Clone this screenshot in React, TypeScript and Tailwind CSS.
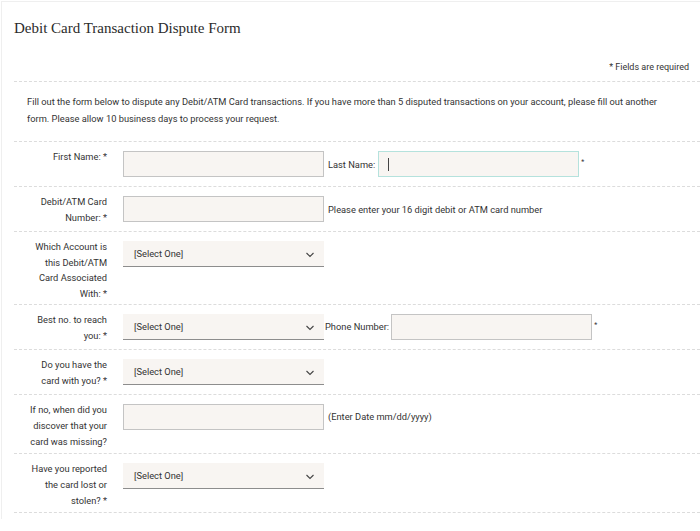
import type { ReactNode } from 'react'

const sans = "font-['Roboto','Liberation_Sans',sans-serif]"

function Label({ children, tight = false }: { children: ReactNode; tight?: boolean }) {
  return (
    <div
      className={
        'w-[93px] shrink-0 pt-[7px] pb-[3px] text-right text-[9.3px] text-[#333] ' +
        (tight ? 'leading-[15.5px]' : 'leading-[16px]')
      }
    >
      {children}
    </div>
  )
}

function TextBox({ focused = false }: { focused?: boolean }) {
  return (
    <div
      className={
        'relative h-[26px] w-[201px] shrink-0 bg-[#f8f5f2] border ' +
        (focused ? 'border-[#b5e2dd]' : 'border-[#c4c4c4]')
      }
    >
      {focused && <span className="absolute left-[9px] top-[6px] h-[13px] w-px bg-[#444]" />}
    </div>
  )
}

function SelectBox() {
  return (
    <div className="flex h-[26px] w-[201px] shrink-0 items-center justify-between bg-[#f8f5f2] border-b border-[#8d8d8d] pl-[11px] pr-[9px]">
      <span className="text-[9.3px] text-[#333]">[Select One]</span>
      <svg width="10" height="6" viewBox="0 0 10 6" className="mt-[3px]">
        <path d="M1.5 1l3.5 3.5 3.5-3.5" fill="none" stroke="#444" strokeWidth="1.1" />
      </svg>
    </div>
  )
}

function Row({ label, tight, children }: { label: ReactNode; tight?: boolean; children: ReactNode }) {
  return (
    <div className="flex items-start border-b border-dashed border-[#dcdcdc]">
      <Label tight={tight}>{label}</Label>
      <div className="ml-[16px] my-[9px] flex items-center text-[9.3px] text-[#333]">{children}</div>
    </div>
  )
}

const Req = () => <span className="ml-[2px] self-start mt-[8px] text-[7px] leading-none">*</span>

export default function App() {
  return (
    <div className={`min-h-[531px] bg-white ${sans}`}>
      <div className="ml-px mt-px border-l border-t border-[#efefef] pl-[12px] pb-[6px]">
        <div className="border-b border-dashed border-[#dcdcdc]">
          <h1 className="pt-[16px] font-['Liberation_Serif','DejaVu_Serif',serif] text-[15px] leading-[20px] text-[#2b2b2b]">
            Debit Card Transaction Dispute Form
          </h1>
          <p className="mt-[21px] pb-[6px] pr-[11px] text-right text-[9px] leading-[16px] text-[#333]">
            * Fields are required
          </p>
        </div>

        <p className="border-b border-dashed border-[#dcdcdc] pt-[11px] pb-[14px] pl-[13px] pr-[24px] text-[9.3px] leading-[17px] text-[#333]">
          Fill out the form below to dispute any Debit/ATM Card transactions. If you have more than 5 disputed
          transactions on your account, please fill out another form. Please allow 10 business days to process your
          request.
        </p>

        <Row label="First Name: *">
          <TextBox />
          <span className="ml-[4px] mr-[3px] mt-[1px]">Last Name:</span>
          <TextBox focused />
          <Req />
        </Row>

        <Row label={<>Debit/ATM Card<br />Number: *</>}>
          <TextBox />
          <span className="ml-[4px] mt-[1px]">Please enter your 16 digit debit or ATM card number</span>
        </Row>

        <Row tight label={<>Which Account is<br />this Debit/ATM<br />Card Associated<br />With: *</>}>
          <SelectBox />
        </Row>

        <Row label={<>Best no. to reach<br />you: *</>}>
          <SelectBox />
          <span className="ml-[1px] mr-[2px]">Phone Number:</span>
          <TextBox />
          <Req />
        </Row>

        <Row label={<>Do you have the<br />card with you? *</>}>
          <SelectBox />
        </Row>

        <Row label={<>If no, when did you<br />discover that your<br />card was missing?</>}>
          <TextBox />
          <span className="ml-[4px]">(Enter Date mm/dd/yyyy)</span>
        </Row>

        <Row label={<>Have you reported<br />the card lost or<br />stolen? *</>}>
          <SelectBox />
        </Row>
      </div>
    </div>
  )
}
